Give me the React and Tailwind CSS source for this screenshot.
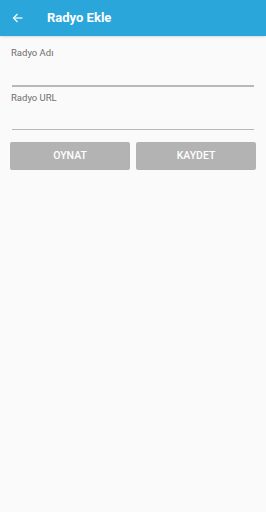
export default function App() {
  return (
    <div className="w-[266px] h-[512px] bg-[#fafafa] flex flex-col" style={{ fontFamily: 'Roboto, "Liberation Sans", sans-serif' }}>
      <header className="h-[36px] bg-[#2ba6db] flex items-center shadow-sm">
        <div className="w-[47px] flex items-center pl-[12px]">
          <svg width="12" height="12" viewBox="0 0 24 24" fill="none" stroke="white" strokeWidth="2.4">
            <path d="M21 12H4" />
            <path d="M11 4l-8 8 8 8" />
          </svg>
        </div>
        <h1 className="text-white text-[13px] font-bold">Radyo Ekle</h1>
      </header>
      <div className="px-[11px] pt-[11px]">
        <label className="block text-[9.5px] text-[#6f6f6f] leading-[12px]">Radyo Adı</label>
        <div className="mx-[1px] mt-[26px] h-[1.5px] bg-[#b8b8b8]" />
        <label className="block mt-[5px] text-[9.5px] text-[#6f6f6f] leading-[12px]">Radyo URL</label>
        <div className="mx-[1px] mt-[25px] h-[1.5px] bg-[#b8b8b8]" />
      </div>
      <div className="px-[10px] mt-[12px] flex gap-[6px]">
        <button className="flex-1 h-[28px] bg-[#b3b3b3] rounded-[2px] text-white text-[10.5px] font-medium">OYNAT</button>
        <button className="flex-1 h-[28px] bg-[#b3b3b3] rounded-[2px] text-white text-[10.5px] font-medium">KAYDET</button>
      </div>
    </div>
  );
}
